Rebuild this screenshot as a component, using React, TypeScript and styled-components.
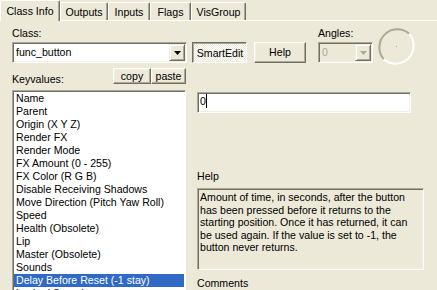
import React from "react";
import styled, { createGlobalStyle } from "styled-components";

const C = {
  face: "#ECE9D8",
  light: "#F1EFE2",
  hi: "#FFFFFF",
  shadow: "#ACA899",
  dark: "#716F64",
  sel: "#316AC5",
};

const Global = createGlobalStyle`
  html, body { margin: 0; padding: 0; background: ${C.face}; }
  body {
    font-family: "Liberation Sans", Arial, sans-serif;
    font-size: 10.6px;
    color: #000;
  }
`;

const Root = styled.div`
  width: 437px;
  height: 290px;
  overflow: hidden;
  background: ${C.face};
  display: flex;
  flex-direction: column;
`;

const TabStrip = styled.div`
  display: flex;
  align-items: flex-end;
  height: 20px;
  border-bottom: 1px solid ${C.hi};
  flex: none;
`;

const Tab = styled.div<{ $active?: boolean; $w: number }>`
  position: relative;
  z-index: ${(p) => (p.$active ? 1 : 0)};
  width: ${(p) => p.$w}px;
  height: ${(p) => (p.$active ? 21 : 18)}px;
  margin-bottom: ${(p) => (p.$active ? -1 : 0)}px;
  padding-top: ${(p) => (p.$active ? 0 : 1)}px;
  box-sizing: border-box;
  display: flex;
  align-items: center;
  justify-content: center;
  line-height: 13px;
  white-space: nowrap;
  background: ${C.face};
  border-top: 1px solid ${C.hi};
  border-left: 1px solid ${C.hi};
  border-right: 1px solid ${C.dark};
  border-radius: 2px 2px 0 0;
  box-shadow: inset -1px 0 ${C.shadow};
`;

const Panel = styled.div`
  flex: 1;
  min-height: 0;
  display: flex;
  flex-direction: column;
  padding-left: 12px;
`;

const TopRow = styled.div`
  flex: none;
  display: flex;
  align-items: flex-end;
  height: 36px;
  padding-top: 6px;
`;

const Field = styled.div<{ $w: number; $ml?: number }>`
  width: ${(p) => p.$w}px;
  margin-left: ${(p) => p.$ml ?? 0}px;
  display: flex;
  flex-direction: column;
`;

const Label = styled.div<{ $mt?: number }>`
  line-height: 13px;
  height: 13px;
  white-space: nowrap;
  margin-top: ${(p) => p.$mt ?? 0}px;
`;

const Combo = styled.div<{ $disabled?: boolean }>`
  margin-top: 2px;
  height: 21px;
  box-sizing: border-box;
  display: flex;
  align-items: center;
  padding: 1px;
  background: ${(p) => (p.$disabled ? C.face : "#fff")};
  color: ${(p) => (p.$disabled ? C.shadow : "#000")};
  border: 1px solid;
  border-color: ${C.shadow} ${C.hi} ${C.hi} ${C.shadow};
  box-shadow: inset 1px 1px ${C.dark}, inset -1px -1px ${C.light};
`;

const ComboText = styled.span`
  flex: 1;
  padding-left: 2px;
  line-height: 13px;
  white-space: nowrap;
  overflow: hidden;
`;

const DropButton = styled.div`
  width: 16px;
  height: 17px;
  box-sizing: border-box;
  display: flex;
  align-items: center;
  justify-content: center;
  background: ${C.face};
  border: 1px solid;
  border-color: ${C.light} ${C.dark} ${C.dark} ${C.light};
  box-shadow: inset 1px 1px ${C.hi}, inset -1px -1px ${C.shadow};
`;

const Button = styled.div<{ $w: number; $ml?: number; $h?: number; $pressed?: boolean }>`
  width: ${(p) => p.$w}px;
  height: ${(p) => p.$h ?? 21}px;
  margin-left: ${(p) => p.$ml ?? 0}px;
  box-sizing: border-box;
  display: flex;
  align-items: center;
  justify-content: center;
  line-height: 13px;
  white-space: nowrap;
  background: ${(p) =>
    p.$pressed
      ? `repeating-conic-gradient(${C.hi} 0 25%, ${C.face} 0 50%) 0 0 / 2px 2px`
      : C.face};
  border: 1px solid;
  border-color: ${(p) =>
    p.$pressed
      ? `${C.dark} ${C.hi} ${C.hi} ${C.dark}`
      : `${C.hi} ${C.dark} ${C.dark} ${C.hi}`};
  box-shadow: ${(p) =>
    p.$pressed
      ? `inset 1px 1px ${C.shadow}, inset -1px -1px ${C.light}`
      : `inset -1px -1px ${C.shadow}, inset 1px 1px ${C.light}`};
  padding-top: ${(p) => (p.$pressed ? 1 : 0)}px;
  padding-left: ${(p) => (p.$pressed ? 1 : 0)}px;
`;

const Dial = styled.svg`
  flex: none;
  align-self: flex-start;
  margin-left: 4px;
  overflow: visible;
`;

const Body = styled.div`
  flex: 1;
  min-height: 0;
  display: grid;
  grid-template-columns: 174px 227px;
  column-gap: 11px;
`;

const Column = styled.div`
  display: flex;
  flex-direction: column;
  min-height: 0;
`;

const KvHeader = styled.div`
  margin-top: 5px;
  height: 16px;
  display: flex;
  align-items: flex-end;
`;

const KvLabel = styled.div`
  flex: 1;
  line-height: 13px;
  margin-bottom: -2px;
`;

const ListBox = styled.div`
  margin-top: 6px;
  flex: 1;
  min-height: 0;
  overflow: hidden;
  padding: 1px;
  background: #fff;
  border: 1px solid;
  border-color: ${C.shadow} ${C.hi} ${C.hi} ${C.shadow};
  border-bottom: none;
  box-shadow: inset 1px 1px ${C.dark};
`;

const ListItem = styled.div<{ $selected?: boolean }>`
  height: 13px;
  line-height: 13px;
  padding-left: 2px;
  white-space: nowrap;
  background: ${(p) => (p.$selected ? C.sel : "transparent")};
  color: ${(p) => (p.$selected ? "#fff" : "#000")};
`;

const ValueEdit = styled.div`
  margin-top: 29px;
  width: 214px;
  height: 21px;
  box-sizing: border-box;
  padding: 2px 2px 0 2px;
  display: flex;
  align-items: flex-start;
  line-height: 13px;
  background: #fff;
  border: 1px solid;
  border-color: ${C.shadow} ${C.hi} ${C.hi} ${C.shadow};
  box-shadow: inset 1px 1px ${C.dark}, inset -1px -1px ${C.light};
`;

const Caret = styled.span`
  display: inline-block;
  width: 1px;
  height: 14px;
  background: #000;
  margin-left: 0px;
  margin-top: -1px;
`;

const HelpBox = styled.div`
  margin-top: 5px;
  width: 227px;
  height: 82px;
  box-sizing: border-box;
  padding: 2px 2px 0 2px;
  line-height: 12.5px;
  background: ${C.face};
  border: 1px solid;
  border-color: ${C.shadow} ${C.hi} ${C.hi} ${C.shadow};
  box-shadow: inset 1px 1px ${C.dark}, inset -1px -1px ${C.light};
`;

const Arrow = ({ color }: { color: string }) => (
  <svg width="7" height="4" viewBox="0 0 7 4">
    <polygon points="0,0 7,0 3.5,4" fill={color} />
  </svg>
);

const tabs = [
  { label: "Class Info", w: 60, active: true },
  { label: "Outputs", w: 48 },
  { label: "Inputs", w: 42 },
  { label: "Flags", w: 41 },
  { label: "VisGroup", w: 55 },
];

const keys = [
  "Name",
  "Parent",
  "Origin (X Y Z)",
  "Render FX",
  "Render Mode",
  "FX Amount (0 - 255)",
  "FX Color (R G B)",
  "Disable Receiving Shadows",
  "Move Direction (Pitch Yaw Roll)",
  "Speed",
  "Health (Obsolete)",
  "Lip",
  "Master (Obsolete)",
  "Sounds",
  "Delay Before Reset (-1 stay)",
  "Locked Sound",
  "Unlocked Sound",
];

export default function App() {
  return (
    <Root>
      <Global />
      <TabStrip>
        {tabs.map((t) => (
          <Tab key={t.label} $w={t.w} $active={t.active}>
            {t.label}
          </Tab>
        ))}
      </TabStrip>
      <Panel>
        <TopRow>
          <Field $w={175}>
            <Label>Class:</Label>
            <Combo>
              <ComboText>func_button</ComboText>
              <DropButton>
                <Arrow color="#000" />
              </DropButton>
            </Combo>
          </Field>
          <Button $w={55} $ml={5} $pressed>
            SmartEdit
          </Button>
          <Button $w={52} $ml={7}>
            Help
          </Button>
          <Field $w={55} $ml={12}>
            <Label>Angles:</Label>
            <Combo $disabled>
              <ComboText>0</ComboText>
              <DropButton>
                <Arrow color={C.shadow} />
              </DropButton>
            </Combo>
          </Field>
          <Dial width="39" height="39" viewBox="0 0 39 39">
            <path
              d="M 32.2 6.8 A 18 18 0 0 0 6.8 32.2"
              stroke={C.shadow}
              strokeWidth="2"
              fill="none"
            />
            <path
              d="M 6.8 32.2 A 18 18 0 0 0 32.2 6.8"
              stroke={C.hi}
              strokeWidth="2"
              fill="none"
            />
            <rect x="19" y="19" width="1" height="1" fill={C.shadow} />
          </Dial>
        </TopRow>
        <Body>
          <Column>
            <KvHeader>
              <KvLabel>Keyvalues:</KvLabel>
              <Button $w={38} $h={16}>
                copy
              </Button>
              <Button $w={35} $h={16}>
                paste
              </Button>
            </KvHeader>
            <ListBox>
              {keys.map((k) => (
                <ListItem key={k} $selected={k.startsWith("Delay")}>
                  {k}
                </ListItem>
              ))}
            </ListBox>
          </Column>
          <Column>
            <ValueEdit>
              <span>0</span>
              <Caret />
            </ValueEdit>
            <Label $mt={57}>Help</Label>
            <HelpBox>
              Amount of time, in seconds, after the button
              <br />
              has been pressed before it returns to the
              <br />
              starting position. Once it has returned, it can
              <br />
              be used again. If the value is set to -1, the
              <br />
              button never returns.
            </HelpBox>
            <Label $mt={7}>Comments</Label>
          </Column>
        </Body>
      </Panel>
    </Root>
  );
}
